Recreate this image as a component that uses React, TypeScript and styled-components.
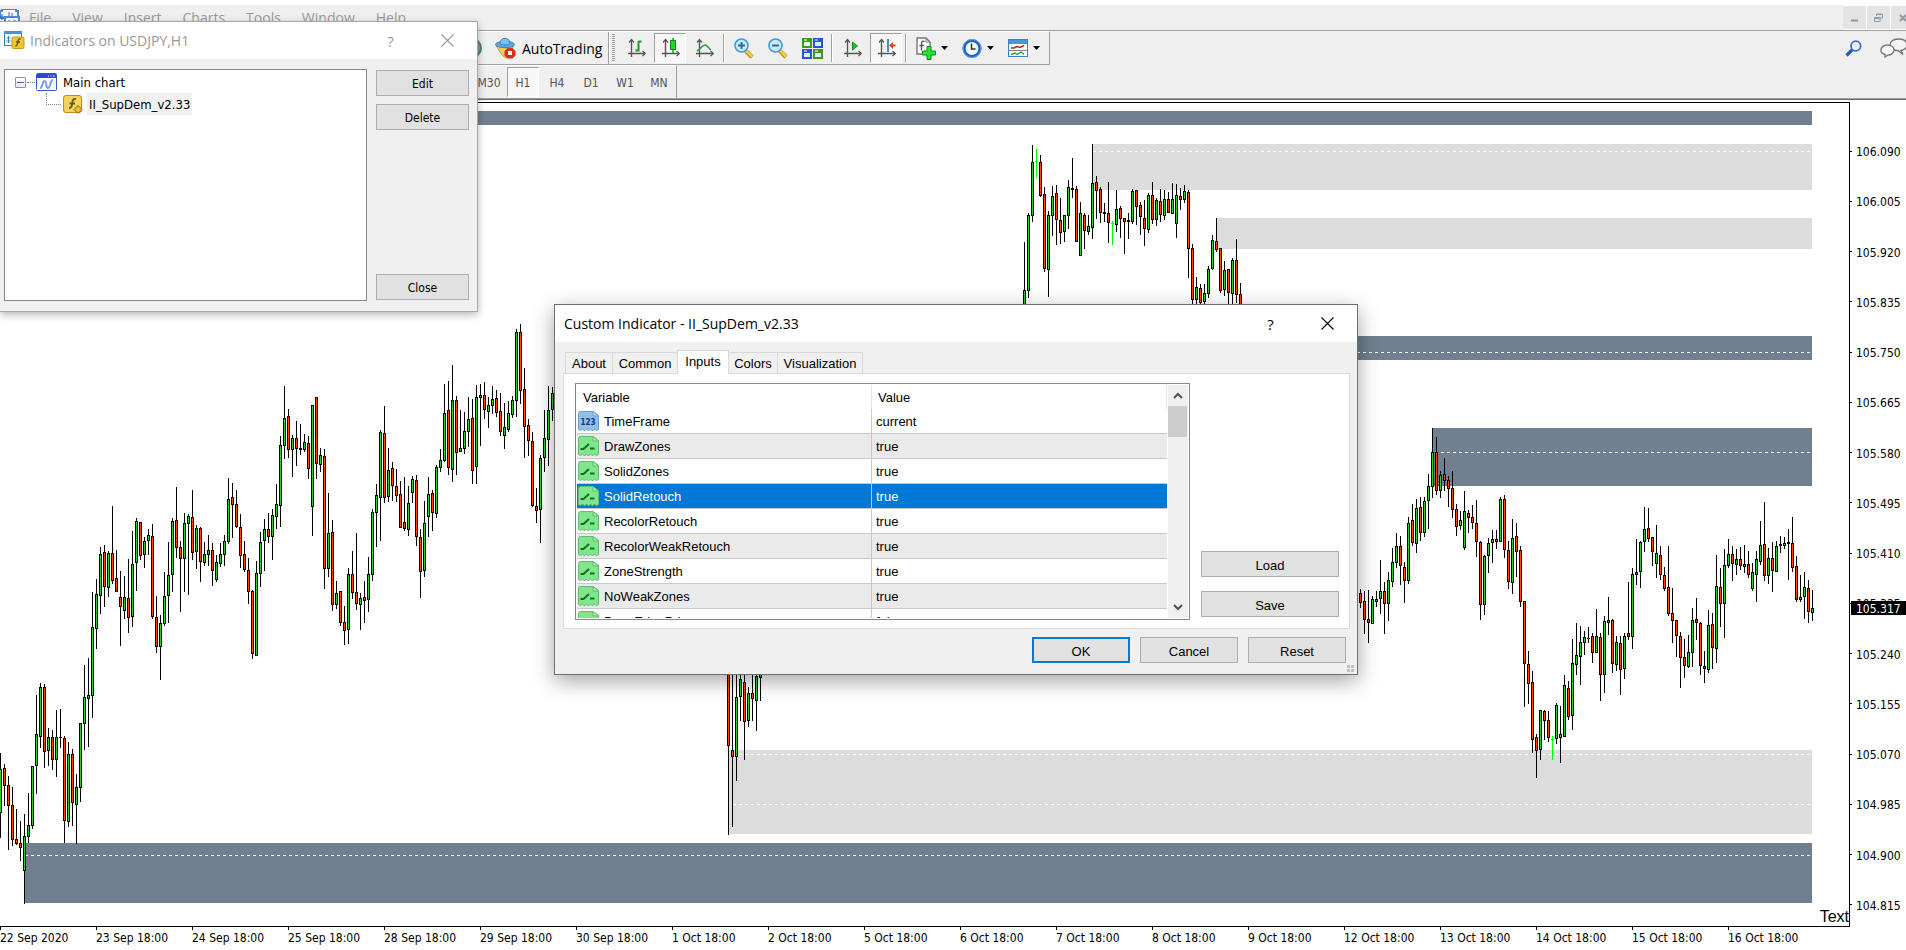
import React from "react";
import styled, { createGlobalStyle, css } from "styled-components";

const UI = '"Open Sans", "Noto Sans", sans-serif';
const TAHOMA = '"DejaVu Sans Condensed", "DejaVu Sans", sans-serif';
const ARIAL = '"Liberation Sans", Arial, sans-serif';

const Global = createGlobalStyle`
  * { box-sizing: border-box; }
  body { margin: 0; background: #fff; color: #000; font-family: ${UI}; overflow: hidden; }
  button { font: inherit; color: inherit; margin: 0; padding: 0; border: 0; background: none; }
  ul, ol { list-style: none; margin: 0; padding: 0; }
  svg { display: block; flex: none; }
`;

/* ---------- terminal frame ---------- */

const Terminal = styled.div`
  position: relative;
  padding-top: 5px;
  min-height: 100vh;
  overflow: hidden;
`;

const MenuBar = styled.nav`
  display: flex;
  align-items: center;
  height: 26px;
  background: #efefef;
  border-bottom: 1px solid #a0a0a0;
  color: #999;
  font-size: 14px;
  line-height: 20px;
`;

const MenuList = styled.ul`
  display: flex;
  gap: 21px;
  margin-left: 9px;
  flex: 1;
`;

const MdiButtons = styled.div`
  display: flex;
  gap: 1px;
  padding: 1px 0;
  background: #fff;
  margin-right: -8px;
`;

const MdiButton = styled.button`
  display: flex;
  align-items: center;
  justify-content: center;
  width: 23px;
  height: 23px;
  background: #e4e4e4;
`;

const ToolRow = styled.div`
  display: flex;
  align-items: flex-start;
  justify-content: space-between;
  background: #efefef;
`;

const Toolbar = styled.div`
  display: flex;
  align-items: center;
  height: 34px;
  padding: 0 2px 0 462px;
  border-top: 1px solid #fff;
  border-right: 1px solid #a0a0a0;
  border-bottom: 1px solid #a0a0a0;
`;

const ToolButton = styled.button<{ $pressed?: boolean; $wide?: boolean }>`
  display: flex;
  align-items: center;
  justify-content: center;
  gap: 5px;
  width: ${(p) => (p.$wide ? 46 : 34)}px;
  height: 30px;
  ${(p) =>
    p.$pressed &&
    css`
      width: 32px;
      margin: 0 1px;
      background: #f7f7f7;
      border: 1px solid #fff;
      border-top-color: #a0a0a0;
      border-left-color: #a0a0a0;
    `}
`;

const AutoButton = styled.button`
  display: flex;
  align-items: center;
  gap: 6px;
  height: 30px;
  padding: 0 4px 0 13px;
  font-size: 14px;
`;

const Separator = styled.span<{ $full?: boolean }>`
  width: 2px;
  height: ${(p) => (p.$full ? 32 : 28)}px;
  margin: 0 2px;
  border-left: 1px solid #a0a0a0;
  border-right: 1px solid #fff;
`;

const Grip = styled.span`
  width: 3px;
  height: 28px;
  margin-right: 4px;
  background: repeating-linear-gradient(#a0a0a0 0 1px, #efefef 1px 2px);
`;

const RightTools = styled.div`
  display: flex;
  gap: 18px;
  padding-top: 7px;
`;

const PeriodRow = styled.div`
  display: flex;
  height: 34px;
  background: #efefef;
  border-bottom: 1px solid #a0a0a0;
  box-shadow: 0 1px 0 #696969;
`;

const Periods = styled.div`
  display: flex;
  align-items: center;
  gap: 2px;
  padding: 0 1px 0 473px;
  border-top: 1px solid #fff;
  border-right: 1px solid #a0a0a0;
`;

const PeriodButton = styled.button<{ $pressed?: boolean }>`
  width: 32px;
  height: 30px;
  padding-top: 2px;
  border: 1px solid transparent;
  font-family: ${TAHOMA};
  font-size: 12px;
  color: #555;
  ${(p) =>
    p.$pressed &&
    css`
      background: #f7f7f7;
      border-color: #a0a0a0 #fff #fff #a0a0a0;
    `}
`;

/* ---------- chart ---------- */

const ChartGrid = styled.main`
  display: grid;
  grid-template-columns: 1fr 56px;
  padding-top: 1px;
  font-family: ${TAHOMA};
  font-size: 12px;
  line-height: 16px;
`;

const Plot = styled.div`
  margin-top: 2px;
  border: 1px solid #000;
  border-left: 0;
  overflow: hidden;
  min-width: 0;
`;

const PriceAxis = styled.div`
  position: relative;
  padding: 44px 0 13px;
`;

const PriceList = styled.ol`
  display: flex;
  flex-direction: column;
  justify-content: space-between;
  height: 100%;
`;

const PriceLabel = styled.li`
  display: flex;
  align-items: center;
  gap: 4px;
  height: 16px;
  &::before { content: ""; width: 2px; height: 1px; margin-bottom: 2px; background: #000; }
`;

const PriceTag = styled.output`
  position: absolute;
  top: 501px;
  left: 1px;
  right: 0;
  height: 14px;
  padding-left: 5px;
  line-height: 16px;
  background: #000;
  color: #fff;
`;

const DateAxis = styled.ol`
  display: flex;
  grid-column: 1 / -1;
  overflow: hidden;
`;

const DateLabel = styled.li`
  flex: none;
  width: 96px;
  white-space: nowrap;
  &::before { content: ""; display: block; width: 1px; height: 3px; background: #000; }
`;

type Kind = "u" | "d" | "n" | "l";
type Bar = [number, number, number, number, Kind];
type Session = { first: number; top: number; bars: Bar[] };

const BAR_STEP = 4;
const TICKS_PER_PX = 3;

/* Each bar: high, body top, body bottom, low (ticks below the session's top)
   and its kind: u up, d down, n unchanged, l signal bar. */
const sessions: Session[] = [
  { first: 0, top: 282, bars: [
    [1104,1152,1284,1359,"u"],[1137,1149,1203,1263,"d"],[1173,1200,1263,1395,"d"],[1206,1260,1365,1383,"d"],
    [1272,1362,1377,1380,"d"],[1308,1374,1389,1428,"d"],[1287,1353,1458,1557,"u"],[1224,1320,1356,1374,"u"],
    [1143,1143,1323,1332,"u"],[930,1047,1143,1227,"u"],[894,906,1056,1089,"u"],[897,906,1101,1149,"d"],
    [1029,1056,1098,1143,"u"],[1035,1056,1125,1155,"d"],[975,1056,1125,1176,"u"],[972,1056,1059,1089,"n"],
    [1053,1059,1308,1374,"d"],[1071,1107,1311,1326,"u"],[1092,1107,1254,1323,"d"],[1167,1206,1260,1377,"u"],
    [1014,1014,1209,1251,"u"],[840,936,1017,1095,"u"],[819,930,942,1086,"u"],[621,726,933,999,"u"],
    [582,627,732,792,"u"],[486,507,633,687,"u"],[480,501,606,666,"d"],[498,504,609,636,"u"],
    [363,504,588,597,"d"],[495,579,621,621,"d"],[558,636,666,783,"d"],[573,636,678,702,"u"],
    [522,639,699,744,"d"],[438,537,696,726,"u"],[399,408,534,618,"u"],[411,411,513,525,"d"],
    [456,468,510,549,"u"],[432,450,468,510,"u"],[417,453,696,702,"d"],[633,696,786,804,"d"],
    [690,714,786,885,"u"],[561,633,717,723,"u"],[471,570,633,714,"u"],[399,408,570,621,"u"],
    [306,405,489,519,"d"],[468,486,522,681,"d"],[384,414,522,621,"u"],[387,393,417,630,"u"],
    [315,396,504,525,"d"],[420,429,501,552,"u"],[426,429,531,591,"d"],[471,507,534,543,"u"],
    [450,495,510,543,"u"],[474,495,558,603,"d"],[510,531,585,591,"u"],[474,507,537,546,"u"],
    [450,468,510,543,"u"],[279,342,471,477,"u"],[294,336,360,459,"d"],[315,357,426,429,"d"],
    [387,426,513,549,"d"],[468,507,555,561,"d"],[519,555,621,657,"d"],[615,618,807,822,"d"],
    [528,564,813,813,"u"],[441,471,567,606,"u"],[402,432,468,558,"u"],[384,432,456,474,"d"],
    [372,390,456,525,"u"],[297,357,396,432,"u"],[153,180,363,426,"u"],[3,99,183,222,"u"],
    [72,93,195,219,"d"],[150,159,195,276,"u"],[108,159,192,243,"d"],[117,189,195,210,"n"],
    [147,171,195,201,"u"],[153,174,252,282,"d"],[60,60,366,453,"u"],[36,36,237,282,"d"],
    [189,210,240,261,"u"],[192,213,552,612,"d"],[324,444,552,576,"u"],
  ] },
  { first: 83, top: 197, bars: [
    [660,696,915,933,"d"],[843,879,915,927,"u"],[873,873,969,978,"d"],[918,966,993,1035,"d"],
    [804,822,990,1032,"u"],[753,822,879,897,"d"],[699,876,912,930,"d"],[879,894,915,990,"u"],
    [843,891,903,969,"d"],[771,822,900,936,"u"],[627,636,825,843,"u"],[552,585,639,741,"u"],
    [390,396,594,723,"u"],[318,399,594,609,"d"],[444,510,591,606,"u"],[486,504,558,603,"d"],
    [507,558,588,606,"d"],[543,582,684,684,"d"],[531,666,687,693,"d"],[558,609,690,708,"u"],
    [528,537,579,609,"u"],[525,540,711,738,"d"],[687,711,816,894,"d"],[603,669,813,831,"u"],
    [531,582,651,711,"u"],[570,579,639,693,"d"],[495,501,642,654,"u"],[447,480,504,516,"u"],
    [252,339,483,486,"u"],[243,330,504,525,"d"],[195,300,510,546,"u"],[288,300,459,525,"d"],
    [330,444,456,456,"u"],[336,393,447,462,"u"],[291,357,396,441,"u"],[297,354,513,552,"d"],
    [255,291,501,552,"u"],[252,285,294,438,"u"],[246,285,330,357,"d"],[291,315,336,384,"u"],
    [258,297,318,342,"u"],[270,294,339,351,"d"],[279,333,396,408,"d"],[309,381,408,447,"u"],
    [303,339,390,396,"u"],[288,300,345,354,"u"],[87,96,303,351,"u"],[72,96,273,312,"d"],
    [204,267,381,474,"d"],[357,375,423,468,"d"],[396,423,618,621,"d"],[564,618,633,669,"d"],
    [465,474,630,729,"u"],[330,414,474,516,"u"],[258,330,420,498,"u"],[261,279,330,363,"u"],
  ] },
  { first: 182, top: 557, bars: [
    [0,0,258,525,"d"],[0,270,291,501,"d"],[0,111,291,363,"u"],[0,57,111,183,"u"],[0,66,186,300,"d"],
    [81,99,183,201,"u"],[0,99,117,183,"d"],[0,48,123,213,"u"],[0,0,54,123,"u"],
  ] },
  { first: 256, top: 27, bars: [
    [336,480,540,540,"u"],[249,255,483,504,"u"],[45,96,258,276,"u"],[54,93,96,144,"l"],
    [75,96,198,201,"d"],[171,192,417,426,"d"],[243,255,420,501,"u"],[168,198,258,318,"u"],
    [165,189,270,345,"d"],[204,270,309,342,"d"],[255,255,306,336,"u"],[150,171,258,297,"u"],
    [84,174,180,204,"n"],[168,177,336,336,"d"],[216,249,378,378,"u"],[249,255,303,357,"d"],
    [255,288,306,315,"u"],[42,159,294,327,"u"],[138,156,183,267,"d"],[171,177,249,279,"d"],
    [219,246,252,276,"n"],[156,249,279,339,"d"],[273,279,282,345,"l"],[180,237,285,306,"u"],
    [228,234,267,324,"d"],[264,264,276,372,"d"],[249,270,276,327,"n"],[177,183,276,282,"u"],
    [180,180,231,285,"d"],[216,225,261,315,"d"],[210,264,297,348,"d"],[189,195,300,309,"u"],
    [156,195,270,282,"d"],[204,210,270,288,"u"],[177,213,255,276,"d"],[180,207,258,270,"u"],
    [186,207,249,249,"d"],[159,207,252,252,"u"],[162,195,282,324,"u"],[174,198,210,240,"d"],
    [165,183,210,219,"u"],[180,186,357,444,"d"],[342,354,510,540,"d"],[441,471,510,540,"u"],
    [462,474,519,540,"d"],[462,489,516,540,"u"],[408,417,492,504,"u"],[315,330,417,420,"u"],
    [264,333,360,366,"d"],[354,354,483,489,"d"],[393,420,480,498,"u"],[417,417,489,540,"d"],
    [384,390,492,540,"u"],[327,390,495,519,"d"],[459,492,540,540,"d"],
  ] },
  { first: 339, top: 297, bars: [
    [570,576,588,600,"u"],[567,579,609,624,"d"],[573,603,660,702,"d"],[570,657,669,729,"d"],
    [588,597,672,672,"u"],[573,597,606,621,"u"],[480,573,597,642,"u"],[546,573,612,702,"d"],
    [516,540,612,663,"u"],[444,486,546,561,"u"],[399,438,489,504,"u"],[408,438,498,555,"d"],
    [486,501,543,609,"d"],[351,369,543,552,"u"],[312,360,429,438,"d"],[297,324,432,459,"u"],
    [291,321,399,423,"d"],[291,303,399,411,"u"],[222,258,303,387,"u"],[84,156,261,294,"u"],
    [111,156,273,285,"d"],[213,225,273,294,"u"],[174,222,243,273,"d"],[228,240,267,321,"d"],
    [213,264,330,354,"d"],[312,327,381,408,"d"],[333,360,378,390,"u"],[273,333,444,450,"u"],
    [330,339,354,399,"d"],[315,351,369,387,"d"],[300,369,426,471,"d"],[423,426,615,660,"d"],
    [465,468,615,645,"u"],[414,429,468,519,"u"],[390,417,429,489,"u"],[390,417,426,447,"d"],
    [291,297,426,426,"u"],[285,297,450,474,"d"],[423,450,546,567,"d"],[357,414,549,582,"u"],
    [369,408,456,531,"d"],[438,450,606,621,"d"],[603,603,792,921,"d"],[753,792,852,912,"d"],
    [813,846,1020,1059,"d"],[1002,1011,1053,1134,"d"],[930,930,1050,1080,"u"],[930,933,963,1020,"d"],
    [933,960,1014,1026,"d"],[1008,1017,1020,1080,"l"],[909,915,1017,1032,"u"],[918,1002,1014,1089,"u"],
    [825,855,1011,1011,"u"],[843,864,951,960,"d"],[717,789,948,990,"u"],[669,765,795,825,"u"],
    [678,726,771,855,"u"],[693,711,729,765,"u"],[681,714,717,729,"n"],[699,708,759,789,"d"],
    [627,708,759,759,"u"],[699,711,825,903,"d"],[648,663,825,879,"u"],[591,660,669,705,"u"],
    [657,660,792,819,"d"],[708,726,795,813,"u"],[708,729,810,885,"d"],[699,708,807,837,"u"],
    [546,699,711,720,"d"],
  ] },
  { first: 408, top: 377, bars: [
    [264,283,470,507,"u"],[177,276,285,315,"u"],[183,186,276,324,"u"],[81,147,186,216,"u"],
    [84,144,177,186,"d"],[171,171,216,258,"d"],[135,219,252,294,"u"],[198,225,285,300,"d"],
    [261,285,327,333,"d"],[198,321,402,408,"d"],[324,399,423,489,"d"],[420,420,468,531,"d"],
    [456,468,534,624,"d"],[477,531,558,594,"d"],[465,516,561,564,"u"],[384,420,519,561,"u"],
    [354,417,429,480,"d"],[426,429,558,585,"d"],[513,558,567,609,"d"],[390,435,570,579,"u"],
    [399,432,504,567,"d"],[225,318,507,549,"u"],[264,321,372,441,"d"],[207,255,372,474,"u"],
    [177,222,258,264,"u"],[198,222,252,303,"d"],[207,237,255,285,"u"],[201,237,258,270,"d"],
    [195,252,261,279,"u"],[213,252,285,294,"d"],[249,276,327,333,"u"],[213,237,285,366,"u"],
    [123,195,246,255,"u"],[66,192,288,303,"d"],[204,234,288,312,"u"],[186,234,273,336,"d"],
    [183,198,276,276,"u"],[168,192,198,219,"n"],[171,189,198,207,"u"],[147,186,192,300,"n"],
    [111,189,264,276,"d"],[228,258,360,366,"d"],[285,351,360,366,"u"],[276,321,351,417,"u"],
    [300,324,396,429,"d"],[330,384,399,423,"u"],
  ] },
];

const ZONE_END = 1812;
const STRONG = "#708090";
const WEAK = "#dcdcdc";
const zones = [
  { x: 0, y: 8, h: 14, fill: STRONG },
  { x: 1092, y: 41, h: 46, fill: WEAK },
  { x: 1216, y: 115, h: 31, fill: WEAK },
  { x: 1300, y: 233, h: 24, fill: STRONG },
  { x: 1432, y: 325, h: 58, fill: STRONG },
  { x: 728, y: 647, h: 84, fill: WEAK },
  { x: 25, y: 740, h: 60, fill: STRONG },
];

const gridLines = [48, 98, 148, 199, 249, 299, 349, 400, 450, 500, 550, 601, 651, 701, 752, 802];

const prices = [
  "106.090", "106.005", "105.920", "105.835", "105.750", "105.665", "105.580", "105.495",
  "105.410", "105.325", "105.240", "105.155", "105.070", "104.985", "104.900", "104.815",
];

const dates = [
  "22 Sep 2020", "23 Sep 18:00", "24 Sep 18:00", "25 Sep 18:00", "28 Sep 18:00", "29 Sep 18:00",
  "30 Sep 18:00", "1 Oct 18:00", "2 Oct 18:00", "5 Oct 18:00", "6 Oct 18:00", "7 Oct 18:00",
  "8 Oct 18:00", "9 Oct 18:00", "12 Oct 18:00", "13 Oct 18:00", "14 Oct 18:00", "15 Oct 18:00",
  "16 Oct 18:00",
];

const px = (ticks: number) => Math.round(ticks / TICKS_PER_PX);

function Candle({ x, top, bar }: { x: number; top: number; bar: Bar }) {
  const [hi, bt, bb, lo, kind] = bar;
  const line = kind === "l" ? "#00ff00" : "#000";
  const y = top + px(bt);
  const h = px(bb) - px(bt);
  return (
    <>
      <rect x={x} y={top + px(hi)} width={1} height={px(lo) - px(hi)} fill={line} />
      <rect x={x - 1} y={y} width={3} height={h} fill={line} />
      {(kind === "u" || kind === "d") && h > 2 && (
        <rect x={x} y={y + 1} width={1} height={h - 2} fill={kind === "u" ? "#32cd32" : "#ff4500"} />
      )}
    </>
  );
}

function PriceChart() {
  return (
    <svg width="100%" height={823} shapeRendering="crispEdges" role="img" aria-label="USDJPY H1 chart">
      {zones.map((z) => (
        <rect key={z.y} x={z.x} y={z.y} width={ZONE_END - z.x} height={z.h} fill={z.fill} />
      ))}
      {gridLines.map((y) => (
        <path key={y} d={`M1 ${y + 0.5}H1849`} stroke="#fff" strokeDasharray="3 3" />
      ))}
      {sessions.map((s) =>
        s.bars.map((bar, i) => (
          <Candle key={s.first + i} x={(s.first + i) * BAR_STEP} top={s.top} bar={bar} />
        ))
      )}
      <text x="100%" y={819} textAnchor="end" fontFamily={ARIAL} fontSize={16}>Text</text>
    </svg>
  );
}

/* ---------- dialogs ---------- */

const Dialog = styled.section<{ $active?: boolean }>`
  position: absolute;
  background: #f0f0f0;
  ${(p) =>
    p.$active
      ? css`
          left: 554px;
          top: 304px;
          width: 804px;
          border: 1px solid #6e6e6e;
          box-shadow: 0 6px 20px rgba(0, 0, 0, 0.36);
        `
      : css`
          left: 0;
          top: 21px;
          width: 478px;
          border: 1px solid #a6a6a6;
          border-left: 0;
          box-shadow: 0 3px 8px rgba(0, 0, 0, 0.28);
        `}
`;

const TitleBar = styled.header<{ $active?: boolean }>`
  display: flex;
  align-items: center;
  height: 37px;
  padding: 0 1px 0 ${(p) => (p.$active ? 9 : 4)}px;
  gap: 5px;
  background: #fff;
  color: ${(p) => (p.$active ? "#000" : "#999")};
`;

const Title = styled.h2`
  flex: 1;
  margin: 0;
  font-size: 14px;
  line-height: 20px;
  font-weight: 400;
`;

const CaptionButtons = styled.div`
  display: flex;
`;

const CaptionButton = styled.button`
  display: flex;
  align-items: center;
  justify-content: center;
  width: 57px;
  height: 37px;
  font-size: 15px;
`;

const PushButton = styled.button<{ $default?: boolean; $width: number; $last?: boolean }>`
  width: ${(p) => p.$width}px;
  height: 26px;
  padding-top: 2px;
  background: #e1e1e1;
  border: ${(p) => (p.$default ? "2px solid #0078d7" : "1px solid #adadad")};
  text-align: center;
  ${(p) => p.$last && "margin-top: auto;"}
`;

const ListBody = styled.div`
  display: flex;
  gap: 9px;
  padding: 10px 8px 10px 4px;
  font-family: ${TAHOMA};
  font-size: 12px;
`;

const TreeBox = styled.ul`
  flex: 1;
  height: 232px;
  padding-top: 1px;
  background: #fff;
  border: 1px solid #828790;
`;

const TreeRow = styled.li<{ $child?: boolean }>`
  display: flex;
  align-items: center;
  height: 22px;
  padding-left: ${(p) => (p.$child ? 41 : 10)}px;
  font-size: 13px;
`;

const Expander = styled.button`
  display: flex;
  align-items: center;
  justify-content: center;
  width: 11px;
  height: 11px;
  border: 1px solid #919191;
  border-radius: 1px;
  background: linear-gradient(#fff, #e8e8e8);
  &::before { content: ""; width: 7px; height: 1px; background: #4b63a7; }
`;

const Twig = styled.span`
  width: 8px;
  margin: 0 1px;
  border-top: 1px dotted #808080;
`;

const Elbow = styled.span`
  align-self: flex-start;
  width: 15px;
  height: 12px;
  margin-right: 2px;
  border-left: 1px dotted #808080;
  border-bottom: 1px dotted #808080;
`;

const TreeLabel = styled.span<{ $selected?: boolean }>`
  height: 22px;
  line-height: 24px;
  margin-left: 4px;
  padding: 0 2px;
  background: ${(p) => (p.$selected ? "#f0f0f0" : "none")};
`;

const ButtonColumn = styled.div<{ $gap: number; $end?: boolean }>`
  display: flex;
  flex-direction: column;
  gap: ${(p) => p.$gap}px;
  justify-content: ${(p) => (p.$end ? "flex-end" : "flex-start")};
  padding: 1px 0 ${(p) => (p.$end ? 3 : 1)}px;
`;

const IndicatorBody = styled.div`
  padding: 8px 7px 11px 8px;
  font-family: ${ARIAL};
  font-size: 13px;
`;

const Tabs = styled.div`
  display: flex;
  align-items: flex-end;
  height: 23px;
  padding-left: 2px;
`;

const Tab = styled.button<{ $width: number; $active?: boolean }>`
  position: relative;
  width: ${(p) => p.$width}px;
  height: 21px;
  background: #f0f0f0;
  border: 1px solid #d9d9d9;
  border-bottom: 0;
  margin-right: -1px;
  ${(p) =>
    p.$active &&
    css`
      z-index: 1;
      height: 24px;
      margin-bottom: -1px;
      padding-bottom: 3px;
      background: #fff;
    `}
`;

const TabPanel = styled.div`
  display: flex;
  gap: 11px;
  padding: 9px 10px 8px 11px;
  background: #fff;
  border: 1px solid #dcdcdc;
`;

const TableFrame = styled.div`
  display: flex;
  gap: 1px;
  flex: 1;
  height: 237px;
  padding: 1px;
  border: 1px solid #828790;
  overflow: hidden;
`;

const TableClip = styled.div`
  flex: 1;
  overflow: hidden;
`;

const InputTable = styled.table`
  width: 100%;
  table-layout: fixed;
  border-spacing: 0;
  text-align: left;
  line-height: 17px;
`;

const HeadCell = styled.th`
  width: 50%;
  height: 24px;
  padding: 1px 6px 0;
  font-weight: 400;
  border-right: 1px solid #e5e5e5;
`;

const InputRow = styled.tr<{ $tone: "plain" | "alt" | "selected" }>`
  background: ${(p) => ({ plain: "#fff", alt: "#eaeaea", selected: "#0078d7" }[p.$tone])};
  color: ${(p) => (p.$tone === "selected" ? "#fff" : "#000")};
`;

const Cell = styled.td`
  height: 25px;
  padding: 1px 4px 0;
  border-bottom: 1px solid #c8c8c8;
  &:first-child { border-right: 1px solid #c8c8c8; padding: 1px 1px 0; }
`;

const NameBox = styled.span`
  display: flex;
  align-items: center;
  gap: 5px;
`;

const ScrollTrack = styled.div`
  display: flex;
  flex-direction: column;
  width: 20px;
  background: #f0f0f0;
`;

const ScrollArrow = styled.button`
  display: flex;
  align-items: center;
  justify-content: center;
  width: 19px;
  height: 21px;
`;

const ScrollThumb = styled.div`
  width: 19px;
  height: 31px;
  margin-bottom: auto;
  background: #cdcdcd;
`;

const Footer = styled.footer`
  display: flex;
  justify-content: flex-end;
  gap: 10px;
  padding: 8px 4px 0 0;
`;

const SizeGrip = styled.span`
  position: absolute;
  right: 3px;
  bottom: 2px;
  width: 7px;
  height: 7px;
  background: linear-gradient(90deg, #bfbfbf 3px, #f0f0f0 3px) 0 0 / 4px 7px;
  &::after {
    content: "";
    position: absolute;
    left: 0;
    right: 0;
    top: 3px;
    height: 1px;
    background: #f0f0f0;
  }
`;

/* ---------- icons ---------- */

const AppIcon = () => (
  <svg width="20" height="18" viewBox="0 0 20 18">
    <path d="M0 2h2V0h14v2h2v7H0z" fill="#fff" stroke="#4a86e0" strokeWidth="2" />
    <path d="M2 5v6M0 8h8M9 3v5M12 4v6" stroke="#2f5fb8" />
    <rect x="5" y="8" width="14" height="9" fill="#fff" stroke="#4a86e0" strokeWidth="2" />
    <path d="M8 16v-4h2v4M13 16v-4h3v4" fill="none" stroke="#2f5fb8" />
  </svg>
);

const CaptionX = () => (
  <svg width="13" height="13" viewBox="0 0 13 13">
    <path d="M.5.5l12 12M12.5.5l-12 12" stroke="currentColor" strokeWidth="1.1" />
  </svg>
);

const Axes = () => (
  <g fill="none" stroke="#555">
    <path d="M4.5 2v17M1 15.500h17" strokeWidth="1.400" />
    <path d="M2 4.500l2.500-3 2.500 3M15.500 13l3 2.500-3 2.500" strokeWidth="1.200" />
  </g>
);

const BarsIcon = () => (
  <svg width="19" height="20" viewBox="0 0 19 20">
    <Axes />
    <path d="M11.500 3v10.500M8.500 12.500h3M11.500 3.500h3" stroke="#1c9a24" strokeWidth="2" fill="none" />
  </svg>
);

const CandlesIcon = () => (
  <svg width="19" height="20" viewBox="0 0 19 20">
    <Axes />
    <path d="M12 0v15" stroke="#1a7f1f" strokeWidth="1.300" />
    <rect x="9.500" y="2.500" width="5" height="9" fill="#22d52c" stroke="#148a1b" />
  </svg>
);

const LineIcon = () => (
  <svg width="19" height="20" viewBox="0 0 19 20">
    <Axes />
    <path d="M2 13c4-2 5-6 8-6 2 0 3 3 6 5" fill="none" stroke="#2c9a36" strokeWidth="1.500" />
  </svg>
);

const Magnifier = ({ plus }: { plus?: boolean }) => (
  <svg width="20" height="21" viewBox="0 0 20 21">
    <path d="M12 13l6 6" stroke="#b98812" strokeWidth="4.500" />
    <path d="M12 12.500l6 6" stroke="#f3cf4c" strokeWidth="2.500" />
    <circle cx="7.500" cy="7.500" r="6.500" fill="#c8eafb" stroke="#3f9bd8" strokeWidth="1.600" />
    <path d={plus ? "M4 7.500h7M7.500 4v7" : "M4 7.500h7"} stroke="#2a6a9f" strokeWidth="2" />
  </svg>
);

const TileIcon = () => (
  <svg width="21" height="21" viewBox="0 0 21 21">
    {[
      { x: 0, y: 0, c: "#3a9c1a" },
      { x: 11, y: 0, c: "#2056d8" },
      { x: 0, y: 11, c: "#2056d8" },
      { x: 11, y: 11, c: "#3a9c1a" },
    ].map(({ x, y, c }) => (
      <g key={`${x}-${y}`}>
        <rect x={x} y={y} width="10" height="10" fill={c} />
        <rect x={x + 2} y={y + 4} width="6" height="4" fill="#e8f0f8" />
        <path d={`M${x + 2} ${y + 2}h3`} stroke="#fff" />
      </g>
    ))}
  </svg>
);

const AutoScrollIcon = () => (
  <svg width="19" height="20" viewBox="0 0 19 20">
    <Axes />
    <path d="M9.500 4v8l5-4z" fill="#22c52c" stroke="#148a1b" />
  </svg>
);

const ShiftIcon = () => (
  <svg width="19" height="20" viewBox="0 0 19 20">
    <Axes />
    <path d="M11 1v13" stroke="#2f6fae" strokeWidth="1.600" />
    <path d="M18.500 7.500h-4" stroke="#d8481c" strokeWidth="2" />
    <path d="M12 7.500l4-3.500v7z" fill="#d8481c" />
  </svg>
);

const AddIndicatorIcon = () => (
  <svg width="20" height="23" viewBox="0 0 20 23">
    <path d="M1 1h9l4 4v12H1z" fill="#fafafa" stroke="#777" strokeWidth="1.400" />
    <path d="M10 1v4h4" fill="none" stroke="#777" />
    <path d="M8.500 4.500c-3-1-3 1-3 3v6M3.500 8.500h4.500" fill="none" stroke="#555" strokeWidth="1.300" />
    <path d="M11 9.500h4v4.500h4.500v4H15v4.500h-4V18H6.500v-4H11z" fill="#25e22e" stroke="#138a18" />
  </svg>
);

const ClockIcon = () => (
  <svg width="20" height="21" viewBox="0 0 20 21">
    <circle cx="10" cy="10.500" r="8" fill="#f4f8fc" stroke="#1b62c4" strokeWidth="3" />
    <circle cx="10" cy="10.500" r="9" fill="none" stroke="#5ba4ee" strokeWidth="1" />
    <path d="M9.500 5.500v5.500h4" fill="none" stroke="#333" strokeWidth="1.500" />
  </svg>
);

const TemplateIcon = () => (
  <svg width="20" height="20" viewBox="0 0 20 20">
    <rect x=".5" y="1.500" width="19" height="17" fill="#fff" stroke="#3b7fc4" />
    <path d="M1 2h18v4H1z" fill="#4a94dc" />
    <path d="M3 10h3l3-1.500 3 1 4-2" fill="none" stroke="#a52f16" strokeWidth="1.500" />
    <path d="M1 12.500h18" stroke="#888" />
    <path d="M3 16.500l4-1.500 2 1.500 4-2.500 3 2.500" fill="none" stroke="#2c9a36" strokeWidth="1.400" />
  </svg>
);

const DropArrow = () => (
  <svg width="7" height="4" viewBox="0 0 7 4"><path d="M0 0h7L3.500 4z" fill="#000" /></svg>
);

const AutoIcon = () => (
  <svg width="21" height="21" viewBox="0 0 21 21">
    <path d="M1 8c2 2 3 4 4 6 2 3 4 5 6 6 4-3 6-7 7-12z" fill="#f6cf52" stroke="#c9982a" />
    <ellipse cx="10" cy="6.500" rx="9.500" ry="3.200" fill="#5ea9dd" stroke="#3b83ba" />
    <path d="M5 5.500c0-7 10-7 10 0-3 2-7 2-10 0z" fill="#7cc1ec" stroke="#3b83ba" />
    <path d="M12.500 10h5l3 3v4.500l-3 3h-5l-3-3V13z" fill="#d8301c" />
    <rect x="13" y="13" width="4" height="4" fill="#fff" />
  </svg>
);

const GlobeIcon = () => (
  <svg width="20" height="20" viewBox="0 0 20 20">
    <circle cx="10" cy="10" r="9" fill="#6fae85" stroke="#4b7d5f" strokeWidth="2" />
  </svg>
);

const SearchIcon = () => (
  <svg width="17" height="17" viewBox="0 0 17 17">
    <path d="M8 9l-6.500 6.500" stroke="#2a5cc0" strokeWidth="3.200" />
    <circle cx="10.800" cy="6" r="4.800" fill="#eef4fc" stroke="#3a6fd0" strokeWidth="1.800" />
  </svg>
);

const ChatIcon = () => (
  <svg width="26" height="20" viewBox="0 0 26 20">
    <path d="M18 1c5 0 9 2 9 6s-4 5-6 5.500l2 4-5-4c-4 0-8-2-8-5.500S13 1 18 1z" fill="#f3f3f6" stroke="#777" strokeWidth="1.400" />
    <path d="M7 7c4 0 7 2 7 5s-3 5-6 5l-3 2v-2.500C2 16 1 14 1 12c0-3 3-5 6-5z" fill="#f8f8fa" stroke="#777" strokeWidth="1.400" />
  </svg>
);

const WindowIcon = () => (
  <svg width="21" height="19" viewBox="0 0 21 19">
    <rect x=".5" y=".5" width="17" height="14" fill="#fff" stroke="#2d7fb5" />
    <path d="M0 0h18v3H0z" fill="#3f97cc" />
    <path d="M4.500 5v7M2.500 10h4M2.500 7h4" stroke="#3b7ea8" />
    <rect x="8" y="6" width="12" height="11.500" rx="1.500" fill="#f0c52e" stroke="#c49512" />
    <path d="M16.500 8c-2-.5-2.500 1-2.700 3s-.8 4-2.500 4M12 11h4" fill="none" stroke="#6b4f06" strokeWidth="1.300" />
  </svg>
);

const MainChartIcon = () => (
  <svg width="21" height="18" viewBox="0 0 21 18">
    <rect x=".5" y=".5" width="20" height="17" rx="1" fill="#fff" stroke="#2a5bd0" />
    <path d="M1 1h19v4H1z" fill="#1c50d8" />
    <path d="M12 3h1M14.500 3h1M17 3h1.500" stroke="#fff" />
    <path d="M4 15c3 0 2-7 4.500-7s1 7 3.500 7 2-8 5-8" fill="none" stroke="#7f9de8" strokeWidth="2" />
  </svg>
);

const FunctionIcon = () => (
  <svg width="20" height="19" viewBox="0 0 20 19">
    <rect x=".5" y=".5" width="18" height="17" rx="2.500" fill="#f4d45c" stroke="#b9892a" />
    <path d="M13 4c-2.500-.5-3.500 1-3.700 4S8.500 13 6 13M6.500 8.500h5.500" fill="none" stroke="#6e5716" strokeWidth="1.800" />
    <path d="M15 10.500l4 4-4 4-4-4z" fill="#e6bd35" stroke="#8a6614" />
  </svg>
);

const ParamIcon = ({ numeric }: { numeric?: boolean }) => {
  const edge = numeric ? "#6f9fd0" : "#5fbf6c";
  return (
    <svg width="21" height="21" viewBox="0 0 21 21">
      <path
        d="M.5 2.500q0-2 2-2H15l5.500 4v14l-2 1-2-1.500-2 2-2-2-2 2-2-2-2 2-2-2-2 1.500-2-1z"
        fill={numeric ? "#93bfee" : "#7fe68d"}
        stroke={edge}
      />
      <path d="M15 .5v4.500h5.500z" fill={numeric ? "#b9d8f6" : "#a8f0b0"} stroke={edge} />
      {numeric ? (
        <text x="10" y="14" textAnchor="middle" fontFamily={TAHOMA} fontWeight="700" fontSize="8" fill="#123a6c">123</text>
      ) : (
        <path d="M2.500 13h3l5.500-5M12 12.500h4.500" fill="none" stroke="#12701e" strokeWidth="2" />
      )}
    </svg>
  );
};

const Chevron = ({ down }: { down?: boolean }) => (
  <svg width="10" height="7" viewBox="0 0 10 7">
    <path d={down ? "M1 1l4 4 4-4" : "M1 6l4-4 4 4"} fill="none" stroke="#505050" strokeWidth="2" />
  </svg>
);

/* ---------- page ---------- */

const inputs = [
  { name: "TimeFrame", value: "current", numeric: true },
  { name: "DrawZones", value: "true" },
  { name: "SolidZones", value: "true" },
  { name: "SolidRetouch", value: "true", selected: true },
  { name: "RecolorRetouch", value: "true" },
  { name: "RecolorWeakRetouch", value: "true" },
  { name: "ZoneStrength", value: "true" },
  { name: "NoWeakZones", value: "true" },
  { name: "DrawEdgePrice", value: "false" },
];

const tabs = [
  { label: "About", width: 48 },
  { label: "Common", width: 66 },
  { label: "Inputs", width: 52, active: true },
  { label: "Colors", width: 50 },
  { label: "Visualization", width: 86 },
];

function IndicatorsDialog() {
  return (
    <Dialog role="dialog" aria-labelledby="indicators-title">
      <TitleBar>
        <WindowIcon />
        <Title id="indicators-title">Indicators on USDJPY,H1</Title>
        <CaptionButtons>
          <CaptionButton aria-label="Help">?</CaptionButton>
          <CaptionButton aria-label="Close window"><CaptionX /></CaptionButton>
        </CaptionButtons>
      </TitleBar>
      <ListBody>
        <TreeBox>
          <TreeRow>
            <Expander aria-label="Collapse" />
            <Twig />
            <MainChartIcon />
            <TreeLabel>Main chart</TreeLabel>
          </TreeRow>
          <TreeRow $child>
            <Elbow />
            <FunctionIcon />
            <TreeLabel $selected>II_SupDem_v2.33</TreeLabel>
          </TreeRow>
        </TreeBox>
        <ButtonColumn $gap={8}>
          <PushButton $width={93}>Edit</PushButton>
          <PushButton $width={93}>Delete</PushButton>
          <PushButton $width={93} $last>Close</PushButton>
        </ButtonColumn>
      </ListBody>
    </Dialog>
  );
}

function CustomIndicatorDialog() {
  return (
    <Dialog $active role="dialog" aria-labelledby="custom-title">
      <TitleBar $active>
        <Title id="custom-title">Custom Indicator - II_SupDem_v2.33</Title>
        <CaptionButtons>
          <CaptionButton aria-label="Help">?</CaptionButton>
          <CaptionButton aria-label="Close window"><CaptionX /></CaptionButton>
        </CaptionButtons>
      </TitleBar>
      <IndicatorBody>
        <Tabs role="tablist">
          {tabs.map((t) => (
            <Tab key={t.label} role="tab" aria-selected={!!t.active} $width={t.width} $active={t.active}>
              {t.label}
            </Tab>
          ))}
        </Tabs>
        <TabPanel role="tabpanel">
          <TableFrame>
            <TableClip>
              <InputTable>
                <thead>
                  <tr><HeadCell>Variable</HeadCell><HeadCell>Value</HeadCell></tr>
                </thead>
                <tbody>
                  {inputs.map((row, i) => (
                    <InputRow key={row.name} $tone={row.selected ? "selected" : i % 2 ? "alt" : "plain"}>
                      <Cell><NameBox><ParamIcon numeric={row.numeric} />{row.name}</NameBox></Cell>
                      <Cell>{row.value}</Cell>
                    </InputRow>
                  ))}
                </tbody>
              </InputTable>
            </TableClip>
            <ScrollTrack>
              <ScrollArrow aria-label="Scroll up"><Chevron /></ScrollArrow>
              <ScrollThumb />
              <ScrollArrow aria-label="Scroll down"><Chevron down /></ScrollArrow>
            </ScrollTrack>
          </TableFrame>
          <ButtonColumn $gap={14} $end>
            <PushButton $width={138}>Load</PushButton>
            <PushButton $width={138}>Save</PushButton>
          </ButtonColumn>
        </TabPanel>
        <Footer>
          <PushButton $width={98} $default>OK</PushButton>
          <PushButton $width={98}>Cancel</PushButton>
          <PushButton $width={98}>Reset</PushButton>
        </Footer>
      </IndicatorBody>
      <SizeGrip />
    </Dialog>
  );
}

export default function App() {
  return (
    <Terminal>
      <Global />
      <MenuBar>
        <AppIcon />
        <MenuList>
          {["File", "View", "Insert", "Charts", "Tools", "Window", "Help"].map((m) => (
            <li key={m}><button>{m}</button></li>
          ))}
        </MenuList>
        <MdiButtons>
          <MdiButton aria-label="Minimize">
            <svg width="7" height="9"><path d="M0 7.500h7" stroke="#8b9aa8" strokeWidth="2" /></svg>
          </MdiButton>
          <MdiButton aria-label="Restore">
            <svg width="9" height="9" viewBox="0 0 9 9">
              <path d="M2.500 3V1h6v4H6M.5 4.500h5.500v4H.5zM2.500 1.500h6M.5 5.500h5" fill="none" stroke="#8b9aa8" />
            </svg>
          </MdiButton>
          <MdiButton aria-label="Close">
            <svg width="8" height="8"><path d="M1 1l6 6M7 1l-6 6" stroke="#8b9aa8" strokeWidth="2" /></svg>
          </MdiButton>
        </MdiButtons>
      </MenuBar>
      <ToolRow>
        <Toolbar role="toolbar">
          <GlobeIcon />
          <AutoButton><AutoIcon />AutoTrading</AutoButton>
          <Separator $full />
          <Grip />
          <ToolButton aria-label="Bar chart"><BarsIcon /></ToolButton>
          <ToolButton aria-label="Candlesticks" $pressed><CandlesIcon /></ToolButton>
          <ToolButton aria-label="Line chart"><LineIcon /></ToolButton>
          <Separator />
          <ToolButton aria-label="Zoom in"><Magnifier plus /></ToolButton>
          <ToolButton aria-label="Zoom out"><Magnifier /></ToolButton>
          <ToolButton aria-label="Tile windows"><TileIcon /></ToolButton>
          <Separator />
          <ToolButton aria-label="Auto scroll"><AutoScrollIcon /></ToolButton>
          <ToolButton aria-label="Chart shift" $pressed><ShiftIcon /></ToolButton>
          <Separator />
          <ToolButton aria-label="Indicators" $wide><AddIndicatorIcon /><DropArrow /></ToolButton>
          <ToolButton aria-label="Periods" $wide><ClockIcon /><DropArrow /></ToolButton>
          <ToolButton aria-label="Templates" $wide><TemplateIcon /><DropArrow /></ToolButton>
        </Toolbar>
        <RightTools>
          <button aria-label="Search"><SearchIcon /></button>
          <button aria-label="Chat"><ChatIcon /></button>
        </RightTools>
      </ToolRow>
      <PeriodRow>
        <Periods role="toolbar">
          {["M30", "H1", "H4", "D1", "W1", "MN"].map((p) => (
            <PeriodButton key={p} $pressed={p === "H1"}>{p}</PeriodButton>
          ))}
        </Periods>
      </PeriodRow>
      <ChartGrid>
        <Plot><PriceChart /></Plot>
        <PriceAxis>
          <PriceList>
            {prices.map((p) => <PriceLabel key={p}>{p}</PriceLabel>)}
          </PriceList>
          <PriceTag>105.317</PriceTag>
        </PriceAxis>
        <DateAxis>
          {dates.map((d) => <DateLabel key={d}>{d}</DateLabel>)}
        </DateAxis>
      </ChartGrid>
      <IndicatorsDialog />
      <CustomIndicatorDialog />
    </Terminal>
  );
}
